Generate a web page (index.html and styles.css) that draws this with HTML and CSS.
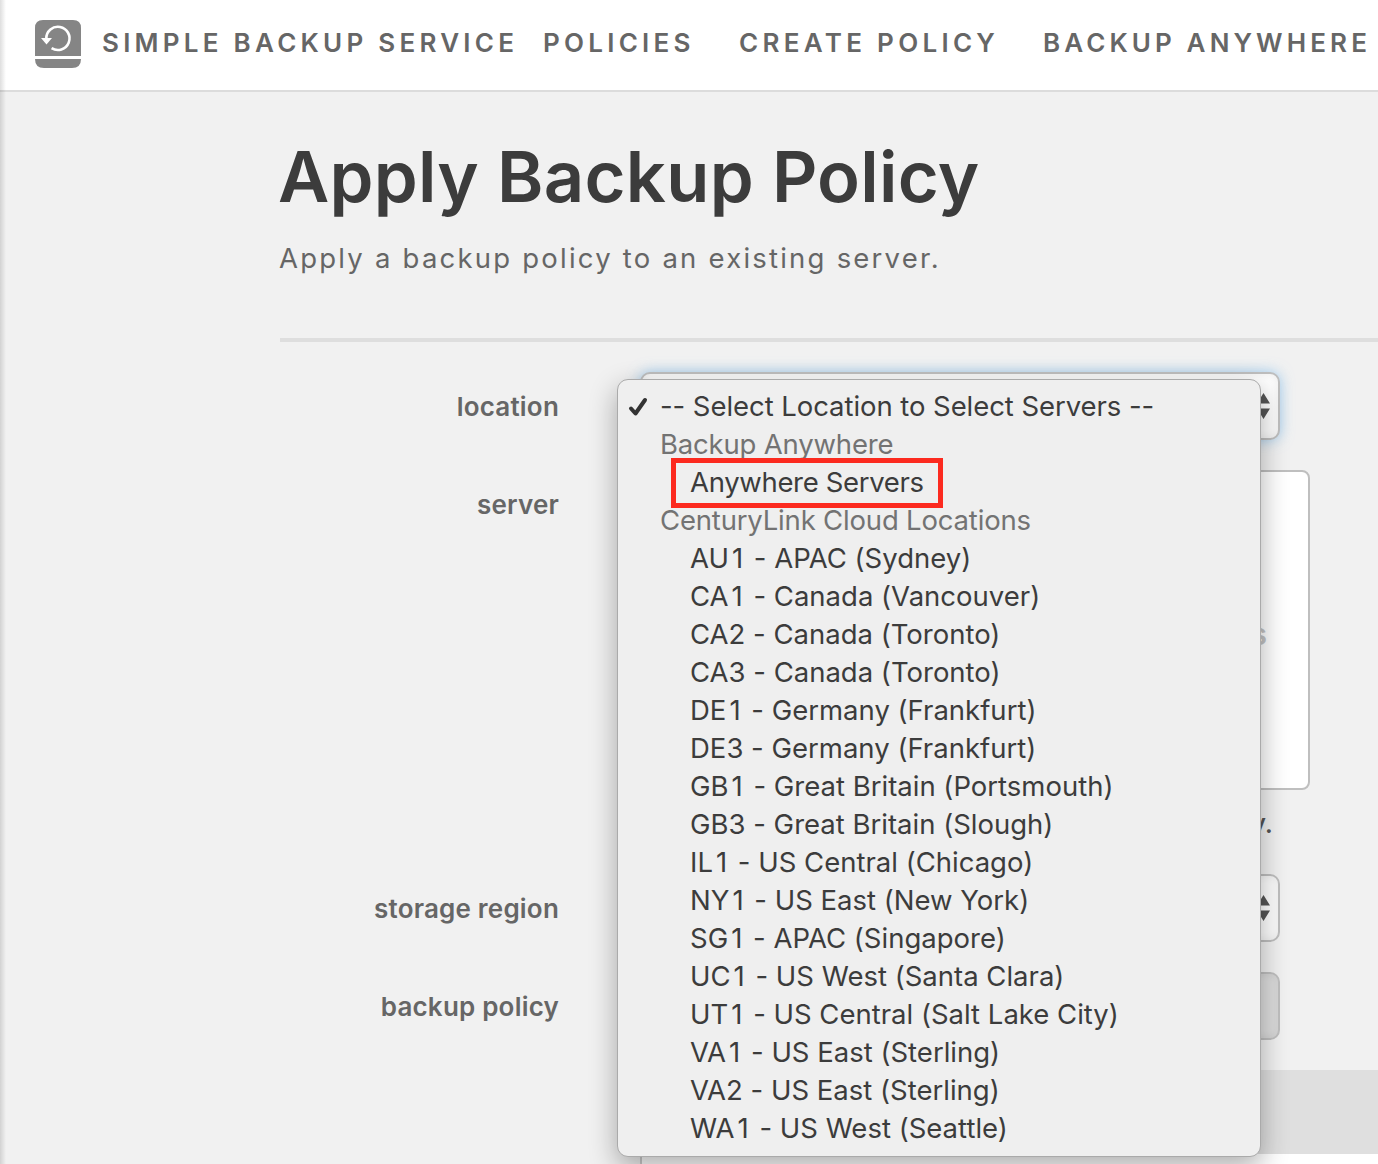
FILE: index.html
```html
<!DOCTYPE html>
<html lang="en">
<head>
<meta charset="utf-8">
<title>Apply Backup Policy</title>
<link rel="stylesheet" href="styles.css">
</head>
<body>
<header class="topbar">
  <svg class="logo" width="46" height="48" viewBox="0 0 46 48">
    <path fill="#858585" d="M8 0H38Q46 0 46 8V36H0V8Q0 0 8 0ZM0 39H46Q46 48 37 48H9Q0 48 0 39Z"/>
    <path fill="none" stroke="#fff" stroke-width="2.6" d="M11.300 18.500A11.600 11.600 0 1 1 16.600 28.100"/>
    <path fill="#fff" d="M6 18H17L11.500 24.500Z"/>
  </svg>
  <span class="brand">SIMPLE BACKUP SERVICE</span>
  <nav class="nav">
    <a class="policies">POLICIES</a>
    <a class="create">CREATE POLICY</a>
    <a class="anywhere">BACKUP ANYWHERE</a>
  </nav>
</header>
<main class="page">
  <h1 class="title">Apply Backup Policy</h1>
  <p class="subtitle">Apply a backup policy to an existing server.</p>
  <form class="form">
    <label class="label">location</label>
    <div class="field">
      <div class="select focused">
        <svg class="arrows" width="13" height="26" viewBox="0 0 13 26"><path fill="#555" d="M6.500 0L13 10.500H0ZM0 15.500H13L6.500 26Z"/></svg>
      </div>
      <ul class="menu">
        <li class="item selected"><svg class="check" width="20" height="20" viewBox="0 0 20 20"><path fill="none" stroke="#333" stroke-width="4" stroke-linecap="round" stroke-linejoin="round" d="M3 11.500L7.500 16.500L17 3"/></svg>-- Select Location to Select Servers --</li>
        <li class="item group">Backup Anywhere</li>
        <li class="item option marked">Anywhere Servers</li>
        <li class="item group">CenturyLink Cloud Locations</li>
        <li class="item option">AU<span class="one">1</span> - APAC (Sydney)</li>
        <li class="item option">CA<span class="one">1</span> - Canada (Vancouver)</li>
        <li class="item option">CA2 - Canada (Toronto)</li>
        <li class="item option">CA3 - Canada (Toronto)</li>
        <li class="item option">DE<span class="one">1</span> - Germany (Frankfurt)</li>
        <li class="item option">DE3 - Germany (Frankfurt)</li>
        <li class="item option">GB<span class="one">1</span> - Great Britain (Portsmouth)</li>
        <li class="item option">GB3 - Great Britain (Slough)</li>
        <li class="item option">IL<span class="one">1</span> - US Central (Chicago)</li>
        <li class="item option">NY<span class="one">1</span> - US East (New York)</li>
        <li class="item option">SG<span class="one">1</span> - APAC (Singapore)</li>
        <li class="item option">UC<span class="one">1</span> - US West (Santa Clara)</li>
        <li class="item option">UT<span class="one">1</span> - US Central (Salt Lake City)</li>
        <li class="item option">VA<span class="one">1</span> - US East (Sterling)</li>
        <li class="item option">VA2 - US East (Sterling)</li>
        <li class="item option">WA<span class="one">1</span> - US West (Seattle)</li>
      </ul>
    </div>
    <label class="label">server</label>
    <div class="field">
      <div class="list">s</div>
      <p class="help">y.</p>
    </div>
    <label class="label">storage region</label>
    <div class="field">
      <div class="select">
        <svg class="arrows" width="13" height="26" viewBox="0 0 13 26"><path fill="#555" d="M6.500 0L13 10.500H0ZM0 15.500H13L6.500 26Z"/></svg>
      </div>
    </div>
    <label class="label">backup policy</label>
    <div class="field"><div class="select disabled"></div></div>
  </form>
  <section class="details"><div class="details-head"></div></section>
</main>
</body>
</html>
```
FILE: styles.css
```css
*, *::before, *::after { box-sizing: border-box; }
body {
  margin: 0;
  height: 1164px;
  position: relative;
  background: #f1f1f1;
  color: #3c3c3c;
  font-family: Inter, "Liberation Sans", sans-serif;
}
/* soft shade along the left window edge */
body::before {
  content: "";
  position: absolute;
  z-index: 5;
  inset: 0 auto 0 0;
  width: 6px;
  background: linear-gradient(90deg, rgba(0,0,0,.13), rgba(0,0,0,0));
}
.topbar {
  display: flex;
  align-items: center;
  height: 92px;
  padding: 0 0 4px 35px;
  background: #fff;
  border-bottom: 2px solid #dcdcdc;
  color: #666;
  font-size: 26px;
  font-weight: 600;
  letter-spacing: 4.25px;
  white-space: nowrap;
}
.logo { flex: none; margin: 2px 21px 0 0; }
.brand, .nav { margin-top: -2px; }
.brand { width: 441px; }
.nav { display: flex; }
.policies { width: 196px; }
.create { width: 304px; letter-spacing: 4.3px; }
.anywhere { letter-spacing: 4.1px; }
.page { padding-left: 280px; }
.title {
  margin: 0 0 0 -2px;
  padding-top: 42px;
  font-size: 70.5px;
  line-height: 86px;
  font-weight: 600;
  letter-spacing: .25px;
  white-space: nowrap;
}
.subtitle {
  margin: 0 0 0 -1px;
  padding-top: 21px;
  height: 118px;
  font-size: 27.5px;
  line-height: 34px;
  letter-spacing: 2.22px;
  color: #666;
}
.form {
  display: grid;
  grid-template-columns: 279px 1fr;
  column-gap: 81px;
  row-gap: 30px;
  padding-top: 30px;
  border-top: 4px solid #dedede;
}
.label {
  padding-top: 1px;
  text-align: right;
  color: #666;
  font-size: 26px;
  font-weight: 600;
  line-height: 68px;
  letter-spacing: .2px;
  height: 68px;
}
.field { position: relative; }
.select {
  display: flex;
  justify-content: flex-end;
  align-items: center;
  width: 640px;
  height: 68px;
  padding-right: 8px;
  border: 2px solid #bfbfbf;
  border-radius: 10px;
  background: #fff;
  box-shadow: inset 0 0 8px rgba(0,0,0,.08);
}
.focused { box-shadow: inset 0 0 8px rgba(0,0,0,.08), 0 0 14px rgba(100,175,235,.6); }
.disabled { background: #dedede; }
.list {
  width: 670px;
  height: 320px;
  padding: 145px 41px 0 0;
  border: 2px solid #bfbfbf;
  border-radius: 8px;
  background: #fff;
  text-align: right;
  color: #c4c4c4;
  font-size: 30px;
  font-weight: 600;
  line-height: 34px;
}
.help {
  width: 633px;
  height: 54px;
  margin: 0;
  padding-top: 17px;
  text-align: right;
  color: #555;
  font-size: 27px;
  font-weight: 500;
  line-height: 34px;
}
.menu {
  position: absolute;
  z-index: 2;
  top: 7px;
  left: -23px;
  width: 644px;
  height: 778px;
  margin: 0;
  padding: 7px 0 0 42px;
  list-style: none;
  border: 1px solid #aaa;
  border-radius: 11px;
  background: #efefef;
  box-shadow: 0 10px 28px rgba(0,0,0,.32);
  font-size: 27.5px;
  font-feature-settings: "calt" 0;
  line-height: 38px;
  white-space: nowrap;
}
.item { height: 38px; position: relative; }
.selected { letter-spacing: -.06px; }
.group { color: #737373; letter-spacing: -.18px; }
.option { padding-left: 30px; }
/* widens the narrow digit so that the codes line up */
.one { padding: 0 3px; }
.check { position: absolute; left: -32px; top: 10px; }
.marked { letter-spacing: -.33px; }
.marked::after {
  content: "";
  position: absolute;
  left: 11px;
  top: -5px;
  width: 272px;
  height: 50px;
  border: 5px solid #fc2a1f;
}
.details {
  height: 94px;
  margin: 30px 0 0 360px;
  border-left: 2px solid #ccc;
  background: #fff;
}
.details-head { height: 84px; background: #dfdfdf; }
```
